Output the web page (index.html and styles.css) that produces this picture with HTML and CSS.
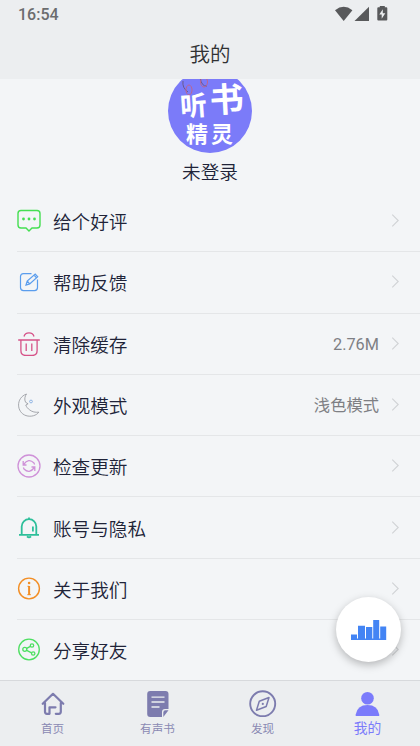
FILE: index.html
```html
<!DOCTYPE html>
<html lang="zh-CN">
<head>
<meta charset="utf-8">
<title>我的</title>
<link rel="stylesheet" href="styles.css">
</head>
<body>
<div class="app">
  <header class="header">
    <div class="status">
      <span class="clock">16:54</span>
      <svg class="status-icons" width="54" height="18" viewBox="0 0 54 18" fill="#58595b">
        <path d="M0 5.2Q8.700-1.700 17.400 5.200L8.700 16z"/>
        <path d="M19.500 16L34 1.800V16z"/>
        <path d="M42.300 3.200q0-1 1-1h1.500V1h5v1.200h1.500q1 0 1 1V14.500q0 1-1 1h-8q-1 0-1-1z"/>
        <path d="M47.800 4.200l-3.500 5.300h2.400v4.200l3.600-5.500h-2.500z" fill="#eceef0"/>
      </svg>
    </div>
    <h1 class="title">我的</h1>
  </header>

  <main class="content">
    <section class="profile">
      <svg class="avatar" width="84" height="84" viewBox="0 0 84 84">
        <circle cx="42" cy="42" r="42" fill="#7b7bf9"/>
        <g fill="none" stroke="#68588f" stroke-width="1"><path d="M15 12q-1 7 5 11M32 9q2 9 7 8"/></g>
        <g fill="none" stroke="#bd668f" stroke-width="1"><ellipse cx="21" cy="21" rx="3" ry="5"/><ellipse cx="36" cy="13" rx="3.500" ry="5"/></g>
        <g class="avatar-text">
          <text x="12" y="46.500" font-size="27" transform="rotate(-4 26 36)">听</text>
          <text x="41.500" y="43" font-size="34" transform="rotate(-3 58 30)">书</text>
          <text x="18" y="73" font-size="22">精</text>
          <text x="43" y="73" font-size="22">灵</text>
        </g>
      </svg>
      <div class="name">未登录</div>
    </section>

    <ul class="menu">
      <li class="row">
        <svg class="icon" viewBox="0 0 24 24" fill="none" stroke="#45df52" stroke-width="1.400"><path d="M4 1.500h16q3 0 3 3v11.500q0 3-3 3h-5L12 22l-3-3H4q-3 0-3-3V4.500q0-3 3-3z"/><g fill="#45df52" stroke="none"><circle cx="6.500" cy="10" r="1.400"/><circle cx="12" cy="10" r="1.400"/><circle cx="17.500" cy="10" r="1.400"/></g></svg>
        <span class="label">给个好评</span>
        <svg class="chevron" viewBox="0 0 8 12"><path d="M1 .5L6.500 6 1 11.500"/></svg>
      </li>
      <li class="row">
        <svg class="icon" viewBox="0 0 24 24" fill="none" stroke="#5a9ded" stroke-width="1.200"><path d="M14.500 3.600H6.500q-3 0-3 3v11q0 3 3 3h11q3 0 3-3v-8"/><path d="M9 15l1.200-4 8-7 2.500 2.700-8 7.200zM10.200 11l2.500 2.900M17 5l2.500 2.800"/></svg>
        <span class="label">帮助反馈</span>
        <svg class="chevron" viewBox="0 0 8 12"><path d="M1 .5L6.500 6 1 11.500"/></svg>
      </li>
      <li class="row">
        <svg class="icon" viewBox="0 0 24 24" fill="none" stroke="#d65288" stroke-width="1.300"><path d="M1.200 8h21.600M3.900 8v10.500q0 5 5 5h6.200q5 0 5-5V8M7 4.500Q8 .8 12 .8t5 3.700M9.200 11.500V19M14.800 11.500V19"/></svg>
        <span class="label">清除缓存</span>
        <span class="value">2.76M</span>
        <svg class="chevron" viewBox="0 0 8 12"><path d="M1 .5L6.500 6 1 11.500"/></svg>
      </li>
      <li class="row">
        <svg class="icon" viewBox="0 0 24 24" fill="none" stroke="#92949b" stroke-width=".8"><path d="M9.500 1C-1.500 5-.5 19.500 9 22.600c5 1.600 10.500-.1 12.800-3.400-3.500.3-6.500-.2-9-2.200-2-1.400-3.400-3-4-5l2.300-1.200-2.500-1.500C7 6.500 8 3 9.500 1z"/><circle cx="14" cy="8.500" r="1.400" stroke="#7ba7df"/></svg>
        <span class="label">外观模式</span>
        <span class="value">浅色模式</span>
        <svg class="chevron" viewBox="0 0 8 12"><path d="M1 .5L6.500 6 1 11.500"/></svg>
      </li>
      <li class="row">
        <svg class="icon" viewBox="0 0 24 24" fill="none" stroke="#cf91d8" stroke-width="1.300"><circle cx="12" cy="12" r="11"/><path d="M6.200 7v4h3.300M6.600 10.500q5-6.800 10.400-1.500l.6 1.500M17.800 17v-4h-3.300M17.400 13.500q-5 6.800-10.400 1.500l-.6-1.500"/></svg>
        <span class="label">检查更新</span>
        <svg class="chevron" viewBox="0 0 8 12"><path d="M1 .5L6.500 6 1 11.500"/></svg>
      </li>
      <li class="row">
        <svg class="icon" viewBox="0 0 24 24" fill="none" stroke="#2dbf9a" stroke-width="1.800"><path d="M2 18.800h20M4.700 18.500V10.500a7.300 7.300 0 0 1 14.600 0v8M10 20.300q2 2 4 0M12 1.500v2M15.900 10.500v5"/></svg>
        <span class="label">账号与隐私</span>
        <svg class="chevron" viewBox="0 0 8 12"><path d="M1 .5L6.500 6 1 11.500"/></svg>
      </li>
      <li class="row">
        <svg class="icon" viewBox="0 0 24 24" fill="none" stroke="#f28e25" stroke-width="1.400"><circle cx="12" cy="11.500" r="10.400"/><path d="M12.100 9v9" stroke-width="2"/><path d="M10.500 9.300h1.600M10.300 17.700h3.600" stroke-width="1"/><circle cx="12.100" cy="6" r="1.300" fill="#f28e25" stroke="none"/></svg>
        <span class="label">关于我们</span>
        <svg class="chevron" viewBox="0 0 8 12"><path d="M1 .5L6.500 6 1 11.500"/></svg>
      </li>
      <li class="row">
        <svg class="icon" viewBox="0 0 24 24" fill="none" stroke="#4ddf61" stroke-width="1.300"><circle cx="12" cy="11.500" r="10.300"/><circle cx="7.800" cy="11.300" r="2"/><circle cx="15" cy="7.500" r="1.700"/><circle cx="16.200" cy="15.500" r="1.700"/><path d="M9.700 10.400l3.700-2M9.700 12.300l4.900 2.500"/></svg>
        <span class="label">分享好友</span>
        <svg class="chevron" viewBox="0 0 8 12"><path d="M1 .5L6.500 6 1 11.500"/></svg>
      </li>
    </ul>
  </main>

  <nav class="tabs">
    <div class="tab">
      <svg width="26" height="28" viewBox="0 0 26 28" fill="none" stroke="#7d7cae" stroke-width="2.200" stroke-linecap="round" stroke-linejoin="round"><path d="M2.700 14.800L13 4.800l10.300 10M5 14v8.800q0 2 2 2h2.500v-6.500h6M20.800 14v8.800q0 2-2 2h-3"/></svg>
      <span>首页</span>
    </div>
    <div class="tab">
      <svg width="26" height="28" viewBox="0 0 26 28"><path fill="#7d7cae" d="M5.200 2h15.300q3 0 3 3v15H20q-3 0-3 3v5H5.200q-3 0-3-3V5q0-3 3-3zM18.300 28v-4.500q0-2.200 2.200-2.200h3z"/><path d="M6.500 8.200h13M6.500 13h13M6.500 18h8" fill="none" stroke="#eceef0" stroke-width="1.300"/></svg>
      <span>有声书</span>
    </div>
    <div class="tab">
      <svg width="28" height="28" viewBox="0 0 28 28" fill="none" stroke="#7d7cae" stroke-width="1.900"><circle cx="13.700" cy="14.800" r="12.500"/><path d="M20 8.500l-2.800 9-9.700 3.800 2.800-9z" stroke-width="1.500" stroke-linejoin="round"/><circle cx="13.800" cy="14.900" r="1.100" fill="#7d7cae" stroke="none"/></svg>
      <span>发现</span>
    </div>
    <div class="tab active">
      <svg width="26" height="28" viewBox="0 0 26 28" fill="#7b7bfb"><circle cx="12.500" cy="9.300" r="6.300"/><path d="M.7 27v-1.500Q2.200 16 12.500 16t11.700 9.500V27z"/></svg>
      <span>我的</span>
    </div>
  </nav>

  <button class="fab" aria-label="统计">
    <svg width="36" height="20" viewBox="0 0 36 20" fill="#4384f4"><path d="M0 14.500h6V20H0zM7 5.700h7V20H7zM15 7h6.300v13H15zM22.200 0h6v20h-6zM29.200 6.500h6V20h-6zM0 18.500h35.200V20H0z"/></svg>
  </button>
</div>
</body>
</html>
```

FILE: styles.css
```css
* { box-sizing: border-box; }

body {
  margin: 0;
  font-family: Roboto, "Noto Sans CJK SC", sans-serif;
  color: #202338;
  background: #f3f5f7;
}

.app {
  position: relative;
  display: flex;
  flex-direction: column;
  width: 420px;
  height: 746px;
  overflow: hidden;
}

.header { flex: none; height: 79px; background: #eceef0; }

.status {
  display: flex;
  justify-content: space-between;
  align-items: center;
  height: 28px;
  padding: 0 31px 0 18px;
}

.clock { font-size: 16px; font-weight: 500; color: #6b6c6e; }

.title {
  height: 51px;
  margin: 0;
  font-size: 20.5px;
  font-weight: 350;
  line-height: 55px;
  text-align: center;
  color: #303133;
}

.content { flex: 1; min-height: 0; overflow: hidden; }

.profile {
  display: flex;
  flex-direction: column;
  align-items: center;
  height: 112px;
}

.avatar { flex: none; margin-top: -10px; }

.avatar-text {
  fill: #fff;
  font-family: "Noto Sans CJK SC", sans-serif;
  font-weight: 700;
}

.name { margin-top: 6px; font-size: 18.6px; font-weight: 350; line-height: 28px; }

.menu { margin: 0; padding: 0 0 0 17px; list-style: none; }

.row {
  display: flex;
  align-items: center;
  height: 61.3px;
  padding-right: 20px;
  border-bottom: 1px solid #e4e6e8;
}

.icon { width: 24px; height: 24px; margin-right: 12px; }
.label { flex: 1; font-size: 18.6px; font-weight: 350; line-height: 28px; padding-top: 4px; }
.value { margin-right: 12px; font-size: 16.3px; line-height: 24px; color: #7e7f84; padding-top: 2px; }
.chevron { width: 9px; height: 13px; margin-top: -1px; fill: none; stroke: #d0d2d5; stroke-width: 1; }

.tabs {
  display: grid;
  grid-template-columns: repeat(4, 1fr);
  flex: 0 0 66px;
  background: #eceef0;
  border-top: 1px solid #d7d9dc;
}

.tab {
  display: flex;
  flex-direction: column;
  align-items: center;
  padding-top: 8px;
  font-size: 11.600px;
  line-height: 24px;
  color: #8a89b3;
}

.active { font-size: 13.800px; line-height: 22px; color: #7b7bfb; }

.fab {
  position: absolute;
  top: 597px;
  left: 336px;
  display: flex;
  align-items: center;
  justify-content: center;
  width: 65px;
  height: 65px;
  padding: 0;
  border: 0;
  border-radius: 50%;
  background: #fff;
  box-shadow: 0 3px 8px rgba(0, 0, 0, .26);
}
```
